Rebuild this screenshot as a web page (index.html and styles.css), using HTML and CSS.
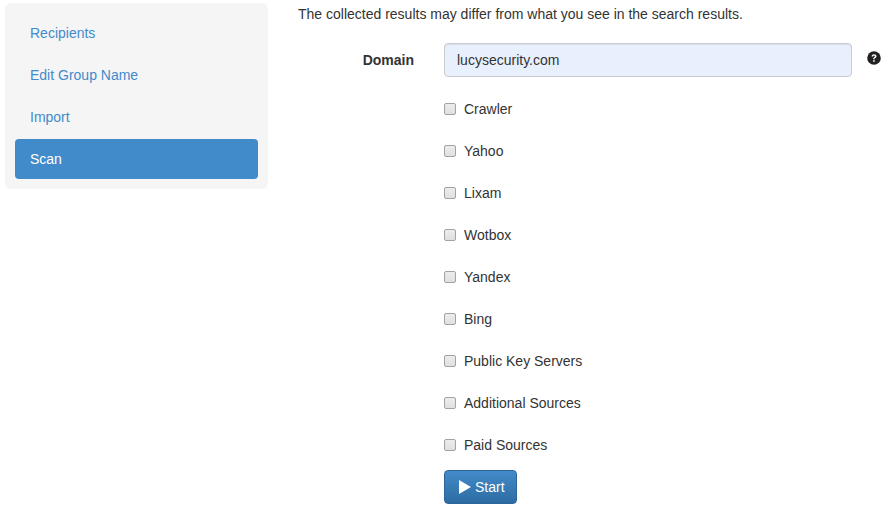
FILE: index.html
```html
<!DOCTYPE html>
<html lang="en">
<head>
    <meta charset="UTF-8">
    <title>Scan</title>
    <link rel="stylesheet" href="styles.css">
</head>
<body>
    <div class="sidebar">
        <a class="nav-item" href="#">Recipients</a>
        <a class="nav-item" href="#">Edit Group Name</a>
        <a class="nav-item" href="#">Import</a>
        <a class="nav-item active" href="#">Scan</a>
    </div>

    <div class="content">
        <p class="intro">The collected results may differ from what you see in the search results.</p>

        <div class="domain-row">
            <label class="domain-label" for="domain">Domain</label>
            <input class="domain-input" id="domain" type="text" value="lucysecurity.com">
            <svg class="help-icon" viewBox="0 0 14 14" width="14" height="14">
                <circle cx="7" cy="7" r="6.8" fill="#222"/>
                <path d="M4.6 5.4C4.7 4 5.7 3.2 7.1 3.2c1.4 0 2.4.8 2.4 2 0 1-.6 1.4-1.2 1.8-.5.3-.7.5-.7 1v.3H6.2v-.5c0-.8.4-1.2 1-1.6.4-.3.7-.5.7-.9 0-.4-.3-.7-.8-.7-.6 0-.9.3-1 .9z" fill="#fff"/>
                <rect x="6.2" y="9.2" width="1.5" height="1.6" fill="#fff"/>
            </svg>
        </div>

        <div class="sources">
            <label class="source"><input type="checkbox"> Crawler</label>
            <label class="source"><input type="checkbox"> Yahoo</label>
            <label class="source"><input type="checkbox"> Lixam</label>
            <label class="source"><input type="checkbox"> Wotbox</label>
            <label class="source"><input type="checkbox"> Yandex</label>
            <label class="source"><input type="checkbox"> Bing</label>
            <label class="source"><input type="checkbox"> Public Key Servers</label>
            <label class="source"><input type="checkbox"> Additional Sources</label>
            <label class="source"><input type="checkbox"> Paid Sources</label>
        </div>

        <button class="start-button" type="button">
            <svg viewBox="0 0 12 14" width="12" height="14"><path d="M0 0L12 7L0 14z" fill="#fff"/></svg>
            Start
        </button>
    </div>
</body>
</html>
```

FILE: styles.css
```css
* {
    box-sizing: border-box;
}
html, body {
    overflow: hidden;
}
body {
    margin: 0;
    height: 528px;
    display: flex;
    align-items: flex-start;
    font-family: "Liberation Sans", Arial, sans-serif;
    font-size: 14px;
    line-height: 20px;
    color: #333;
    background-color: #fff;
}

/* Sidebar */
.sidebar {
    width: 264px;
    margin: 3px 0 0 5px;
    padding: 10px;
    display: flex;
    flex-direction: column;
    gap: 2px;
    background-color: #f5f5f5;
    border-radius: 6px;
}
.nav-item {
    display: block;
    height: 40px;
    padding: 10px 15px;
    color: #428bca;
    text-decoration: none;
    border-radius: 4px;
}
.nav-item.active {
    color: #fff;
    background-color: #428bca;
}

/* Main content */
.content {
    margin-left: 30px;
    flex: 1;
}
.intro {
    margin: 4px 0 0;
}
.domain-row {
    display: flex;
    align-items: center;
    margin-top: 19px;
}
.domain-label {
    width: 116px;
    text-align: right;
    font-weight: 700;
}
.domain-input {
    width: 408px;
    height: 34px;
    margin-left: 30px;
    padding: 6px 12px;
    font: inherit;
    color: #333;
    background-color: #e8f0fe;
    border: 1px solid #ccc;
    border-radius: 4px;
    box-shadow: inset 0 1px 1px rgba(0, 0, 0, 0.075);
}
.help-icon {
    flex-shrink: 0;
    margin: 0 0 4px 15px;
}

/* Source checkboxes */
.sources {
    margin: 11px 0 0 146px;
}
.source {
    display: flex;
    align-items: center;
    gap: 8px;
    height: 42px;
}
.source input {
    appearance: none;
    width: 12px;
    height: 12px;
    margin: 0;
    background: linear-gradient(#ececec, #e0e0e0);
    border: 1px solid #a3a3a3;
    border-radius: 2px;
}

/* Start button */
.start-button {
    display: flex;
    align-items: center;
    gap: 4px;
    width: 73px;
    height: 34px;
    margin: 4px 0 0 146px;
    padding: 0 0 0 14px;
    font: inherit;
    color: #fff;
    background: linear-gradient(#428bca, #2d6ca2);
    border: 1px solid #2b669a;
    border-radius: 4px;
}
.start-button svg {
    flex-shrink: 0;
}
```
